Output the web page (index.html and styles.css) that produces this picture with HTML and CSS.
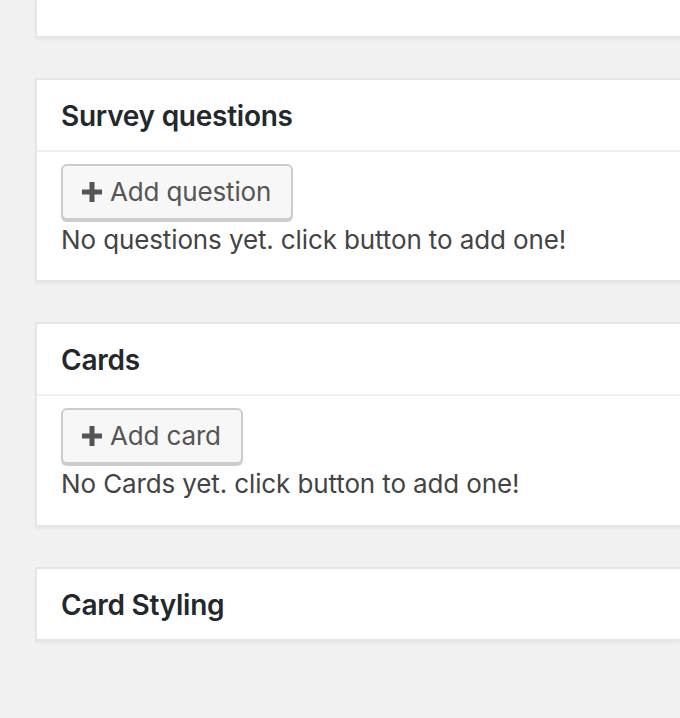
FILE: index.html
```html
<!DOCTYPE html>
<html lang="en">
<head>
<meta charset="utf-8">
<title>Survey editor</title>
<link rel="stylesheet" href="styles.css">
</head>
<body>
<div class="wrap">
  <div class="postbox postbox-cut">
    <div class="inside-blank"></div>
  </div>

  <div class="postbox">
    <h2 class="hndle">Survey questions</h2>
    <div class="inside">
      <button class="button" type="button">
        <svg class="plus" viewBox="0 0 20 20" width="20" height="20" aria-hidden="true"><path d="M7.5 0h5v7.5H20v5h-7.5V20h-5v-7.5H0v-5h7.5z"/></svg>
        <span>Add question</span>
      </button>
      <p class="empty">No questions yet. click button to add one!</p>
    </div>
  </div>

  <div class="postbox">
    <h2 class="hndle">Cards</h2>
    <div class="inside">
      <button class="button" type="button">
        <svg class="plus" viewBox="0 0 20 20" width="20" height="20" aria-hidden="true"><path d="M7.5 0h5v7.5H20v5h-7.5V20h-5v-7.5H0v-5h7.5z"/></svg>
        <span>Add card</span>
      </button>
      <p class="empty">No Cards yet. click button to add one!</p>
    </div>
  </div>

  <div class="postbox closed">
    <h2 class="hndle">Card Styling</h2>
  </div>
</div>
</body>
</html>
```

FILE: styles.css
```css
html, body {
  margin: 0;
  padding: 0;
  background: #f1f1f1;
}

body {
  font-family: Inter, "Noto Sans", "Liberation Sans", sans-serif;
  color: #444;
}

.wrap {
  padding-left: 35px;
}

.postbox {
  background: #fff;
  border: 2px solid #e5e5e5;
  border-right: 0;
  box-shadow: 0 2px 2px rgba(0, 0, 0, 0.04);
  margin-bottom: 40px;
}

.postbox-cut {
  border-top: 0;
}

.inside-blank {
  height: 36px;
}

.hndle {
  margin: 0;
  padding: 17px 24px 15px;
  font-size: 28px;
  line-height: 38px;
  font-weight: 600;
  letter-spacing: -0.25px;
  color: #23282d;
  border-bottom: 2px solid #eeeeee;
}

.closed .hndle {
  border-bottom: 0;
}

.inside {
  margin-top: 12px;
  padding: 0 24px 22px;
}

.button {
  display: inline-flex;
  align-items: center;
  gap: 8px;
  height: 56px;
  padding: 0 20px 0 19px;
  margin: 0;
  box-sizing: border-box;
  border: 2px solid #cccccc;
  border-radius: 6px;
  background: #f7f7f7;
  box-shadow: 0 2px 0 #cccccc;
  color: #555;
  font-family: inherit;
  font-size: 26px;
  line-height: 52px;
  letter-spacing: -0.15px;
  vertical-align: top;
}

.plus {
  display: block;
  fill: #555;
  flex: none;
}

.empty {
  margin: 0;
  padding-top: 2px;
  font-size: 26px;
  line-height: 36.4px;
  letter-spacing: -0.12px;
  color: #444;
}
```
